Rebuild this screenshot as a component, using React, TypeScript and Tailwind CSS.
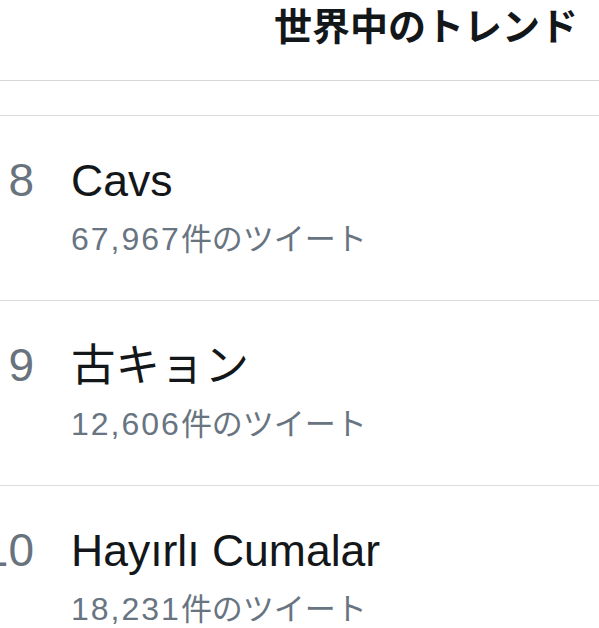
import React from 'react';

type Trend = {
  rank: number;
  name: string;
  count: string;
};

const trends: Trend[] = [
  { rank: 8, name: 'Cavs', count: '67,967' },
  { rank: 9, name: '古キョン', count: '12,606' },
  { rank: 10, name: 'Hayırlı Cumalar', count: '18,231' },
];

const TrendRow: React.FC<{ trend: Trend }> = ({ trend }) => (
  <div className="flex h-[185px] shrink-0 border-b border-[#dcdcdc] pt-[39px]">
    <div className="flex w-[34px] shrink-0 justify-end">
      <span className="shrink-0 text-[46px] leading-[50px] text-[#69737d]">{trend.rank}</span>
    </div>
    <div className="ml-[37px] flex flex-col">
      <span className="whitespace-nowrap text-[44.5px] leading-[52px] text-[#14171a]">{trend.name}</span>
      <span className="mt-[12px] whitespace-nowrap text-[31px] leading-[40px] text-[#68747f]">
        <span className="text-[32px] tracking-[2px]">{trend.count}</span>件のツイート
      </span>
    </div>
  </div>
);

const App: React.FC = () => {
  return (
    <div
      className="flex h-[628px] w-full flex-col overflow-hidden bg-white"
      style={{ fontFamily: '"Liberation Sans", "Noto Sans CJK JP", sans-serif' }}
    >
      <div className="flex h-[81px] shrink-0 justify-end border-b border-[#d6d6d6] pr-[21px] pt-[8px]">
        <h1 className="text-[38px] font-bold leading-none text-[#14171a]">世界中のトレンド</h1>
      </div>
      <div className="h-[35px] shrink-0 border-b border-[#dcdcdc]" />
      {trends.map((t) => (
        <TrendRow key={t.rank} trend={t} />
      ))}
    </div>
  );
};

export default App;
